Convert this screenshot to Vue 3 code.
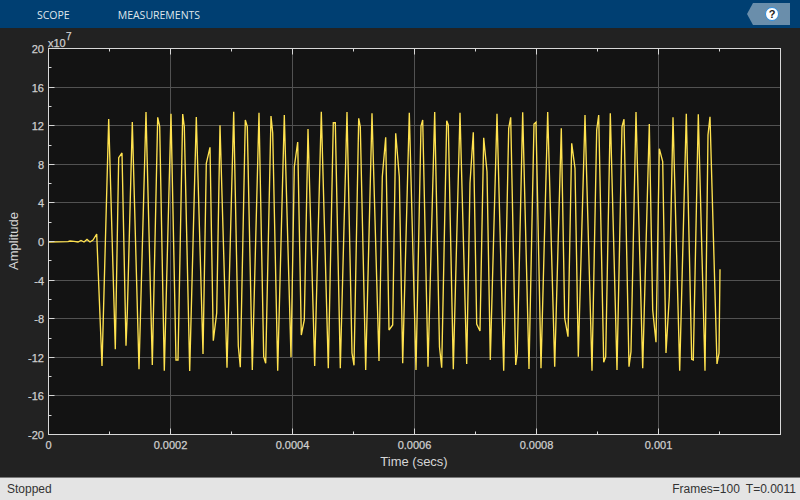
<script setup>
const X0 = 48.5, X1 = 780.5, Y0 = 48.5, Y1 = 434.5
const yStep = (Y1 - Y0) / 10
const xStep = 122
const yLabels = ['20', '16', '12', '8', '4', '0', '-4', '-8', '-12', '-16', '-20']
const yMajors = yLabels.map((label, i) => ({ label, y: Math.round(Y0 + i * yStep - 0.5) + 0.5 }))
const yMinors = yLabels.slice(1).map((_, i) => Math.round(Y0 + (i + 0.5) * yStep - 0.5) + 0.5)
const xLabels = ['0', '0.0002', '0.0004', '0.0006', '0.0008', '0.001']
const xMajors = xLabels.map((label, i) => ({ label, x: X0 + i * xStep }))
const xMinors = [0, 1, 2, 3, 4, 5].map(i => X0 + (i + 0.5) * xStep)
const points = `48,242 68,241.6 70,241 74,241.4 78,242 81,240.5 84,242 87,239.5 90,242 93,240 96.7,234
102,366 108.7,119 115.3,349.3 118.7,157.7 122,153 126,345.7 127.3,313 132.3,122 139,369.3 146,112 152.3,365
157.7,117.3 159.7,126.7 164.3,370.7 171,113.7 176,360 178,360 182.7,114 184.3,126.7 189.7,371 196.3,117 203,354
206.3,163.3 210,147.3 213.3,340.7 216.7,313 220,125.3 227,367.7 233.7,111.7 238.3,346 240.3,367.3 245.3,120 247.3,126.7
252.3,370 259,112.7 263.7,356.7 265.7,363.3 271,116 272.7,133 277.7,370.7 284.3,115 291,357.3 294.3,166.7 297.7,142
301.3,335 304.3,320 308,129 314.7,366 321.3,111.7 328.3,368.3 333.3,122.7 335.3,122.7 340.3,368.3 347,112 352,353
354,365.3 358.7,118.3 360.3,126.7 365.7,370 372,113.3 379,361 382.3,176.7 385.7,137.3 389,330 392.7,325 395.7,133.3
399.3,176.7 402.7,363.3 409.3,112.7 416,370 421,126 422.7,120 428,366.7 434.7,112 439.5,347 441.7,367.7 446.7,120.7 448.3,125
453.3,369.3 460,112.7 466.7,364 470,183.3 473.3,132.3 476.7,324 480,331 483.7,137.7 487,171.7 490.3,360 497,113.7
503.7,370.7 508.7,128.3 510.7,117.3 515.7,365 517.3,353 522.7,112.3 529,369 534,124 536,122.3 541,368.3 547.7,112
554.7,366.7 561.3,128.3 564.7,318.3 568,336.7 571.7,143.3 575,168.3 578.3,356.7 585,115 592,370.7 596.7,130 598.7,115
603.7,362.3 605.7,356.7 610.3,113.3 617,370 622,126.7 624,119.3 629,366.7 631,351.7 636,112 642.7,368.3 649.3,124
652.7,310 656,342.3 659.3,148.7 662.7,161.7 666,353 669.3,296.7 673,117.3 679.7,370.7 686.3,113.7 691.7,359.3 693.3,360
698.3,114.3 705,370.7 708,135 710,116.7 717,364 719,353.3 720,269.3`
</script>

<template>
  <div class="scope">
    <header class="toolbar">
      <nav class="tabs">
        <span class="tab">SCOPE</span>
        <span class="tab">MEASUREMENTS</span>
      </nav>
      <button class="help" type="button" aria-label="Help">
        <span class="help-circle">?</span>
      </button>
    </header>

    <main class="plot-area">
      <svg class="chart" width="800" height="449" viewBox="0 28 800 449">
        <rect :x="X0" :y="Y0" :width="X1 - X0" :height="Y1 - Y0" fill="#131313" />
        <g stroke="#525252" stroke-width="1">
          <line v-for="t in yMajors.slice(1, -1)" :key="t.label" :x1="X0" :x2="X1" :y1="t.y" :y2="t.y" />
          <line v-for="t in xMajors.slice(1)" :key="t.label" :x1="t.x" :x2="t.x" :y1="Y0" :y2="Y1" />
        </g>
        <polyline :points="points" fill="none" stroke="#ffe24f" stroke-width="1.35" stroke-linejoin="miter" stroke-miterlimit="3" />
        <g stroke="#d8d8d8" stroke-width="1">
          <template v-for="x in xMinors" :key="x">
            <line :x1="x" :x2="x" :y1="Y0" :y2="Y0 + 3" />
            <line :x1="x" :x2="x" :y1="Y1" :y2="Y1 - 3" />
          </template>
          <template v-for="t in xMajors" :key="t.label">
            <line :x1="t.x" :x2="t.x" :y1="Y0" :y2="Y0 + 6" />
            <line :x1="t.x" :x2="t.x" :y1="Y1" :y2="Y1 - 6" />
          </template>
          <template v-for="y in yMinors" :key="y">
            <line :x1="X0" :x2="X0 + 3" :y1="y" :y2="y" />
          </template>
          <template v-for="t in yMajors" :key="t.label">
            <line :x1="X0" :x2="X0 + 6" :y1="t.y" :y2="t.y" />
          </template>
        </g>
        <rect :x="X0" :y="Y0" :width="X1 - X0" :height="Y1 - Y0" fill="none" stroke="#d8d8d8" />

        <g class="tick-text">
          <text v-for="t in yMajors" :key="t.label" x="44" :y="t.y + 4" text-anchor="end">{{ t.label }}</text>
          <text v-for="t in xMajors" :key="t.label" :x="t.x" y="449" text-anchor="middle">{{ t.label }}</text>
          <text x="48" y="47">x10</text>
          <text x="66" y="40" class="exp">7</text>
        </g>
        <text class="axis-label" x="414" y="466" text-anchor="middle">Time (secs)</text>
        <text class="axis-label" transform="translate(18 241) rotate(-90)" text-anchor="middle">Amplitude</text>
      </svg>
    </main>

    <footer class="status">
      <span>Stopped</span>
      <span class="status-right">
        <span>Frames=100</span>
        <span>T=0.0011</span>
      </span>
    </footer>
  </div>
</template>

<style>
html, body { margin: 0; background: #222; }
</style>

<style scoped>
.scope {
  width: 800px;
  height: 500px;
  display: flex;
  flex-direction: column;
  overflow: hidden;
  background: #222222;
}
.toolbar {
  height: 28px;
  flex: none;
  display: flex;
  align-items: flex-start;
  justify-content: space-between;
  background: #003f72;
  padding: 3px 10px 0 37px;
  box-sizing: border-box;
}
.tabs {
  display: flex;
  gap: 48px;
  height: 24px;
  align-items: center;
  margin-top: -3px;
  font: 10.5px "Open Sans", sans-serif;
  color: #dfe6ec;
  padding-top: 3px;
}
.help {
  width: 43px;
  height: 22px;
  border: 0;
  padding: 0;
  margin: 0;
  display: flex;
  align-items: center;
  justify-content: flex-end;
  background: #6a8eab;
  clip-path: polygon(6px 0, 100% 0, 100% 100%, 6px 100%, 0 50%);
}
.help-circle {
  width: 12px;
  height: 12px;
  margin-right: 11px;
  border-radius: 50%;
  background: #fff;
  border: 1px solid #2f8fe0;
  display: flex;
  align-items: center;
  justify-content: center;
  font: bold 11px "Liberation Sans", sans-serif;
  color: #222;
}
.plot-area {
  flex: 1;
  min-height: 0;
}
.chart {
  display: block;
}
.tick-text text {
  font: 11px "Liberation Sans", sans-serif;
  fill: #cfcfcf;
  stroke: #cfcfcf;
  stroke-width: 0.25;
}
.tick-text .exp {
  font-size: 10px;
}
.axis-label {
  font: 13px "Liberation Sans", sans-serif;
  fill: #d6d6d6;
}
.status {
  height: 23px;
  flex: none;
  box-sizing: border-box;
  border-top: 1px solid #7a7a7a;
  background: #e4e4e4;
  display: flex;
  align-items: center;
  justify-content: space-between;
  padding: 0 4px 0 7px;
  font: 12px "Liberation Sans", sans-serif;
  color: #333;
}
.status-right {
  display: flex;
  gap: 6px;
}
</style>
